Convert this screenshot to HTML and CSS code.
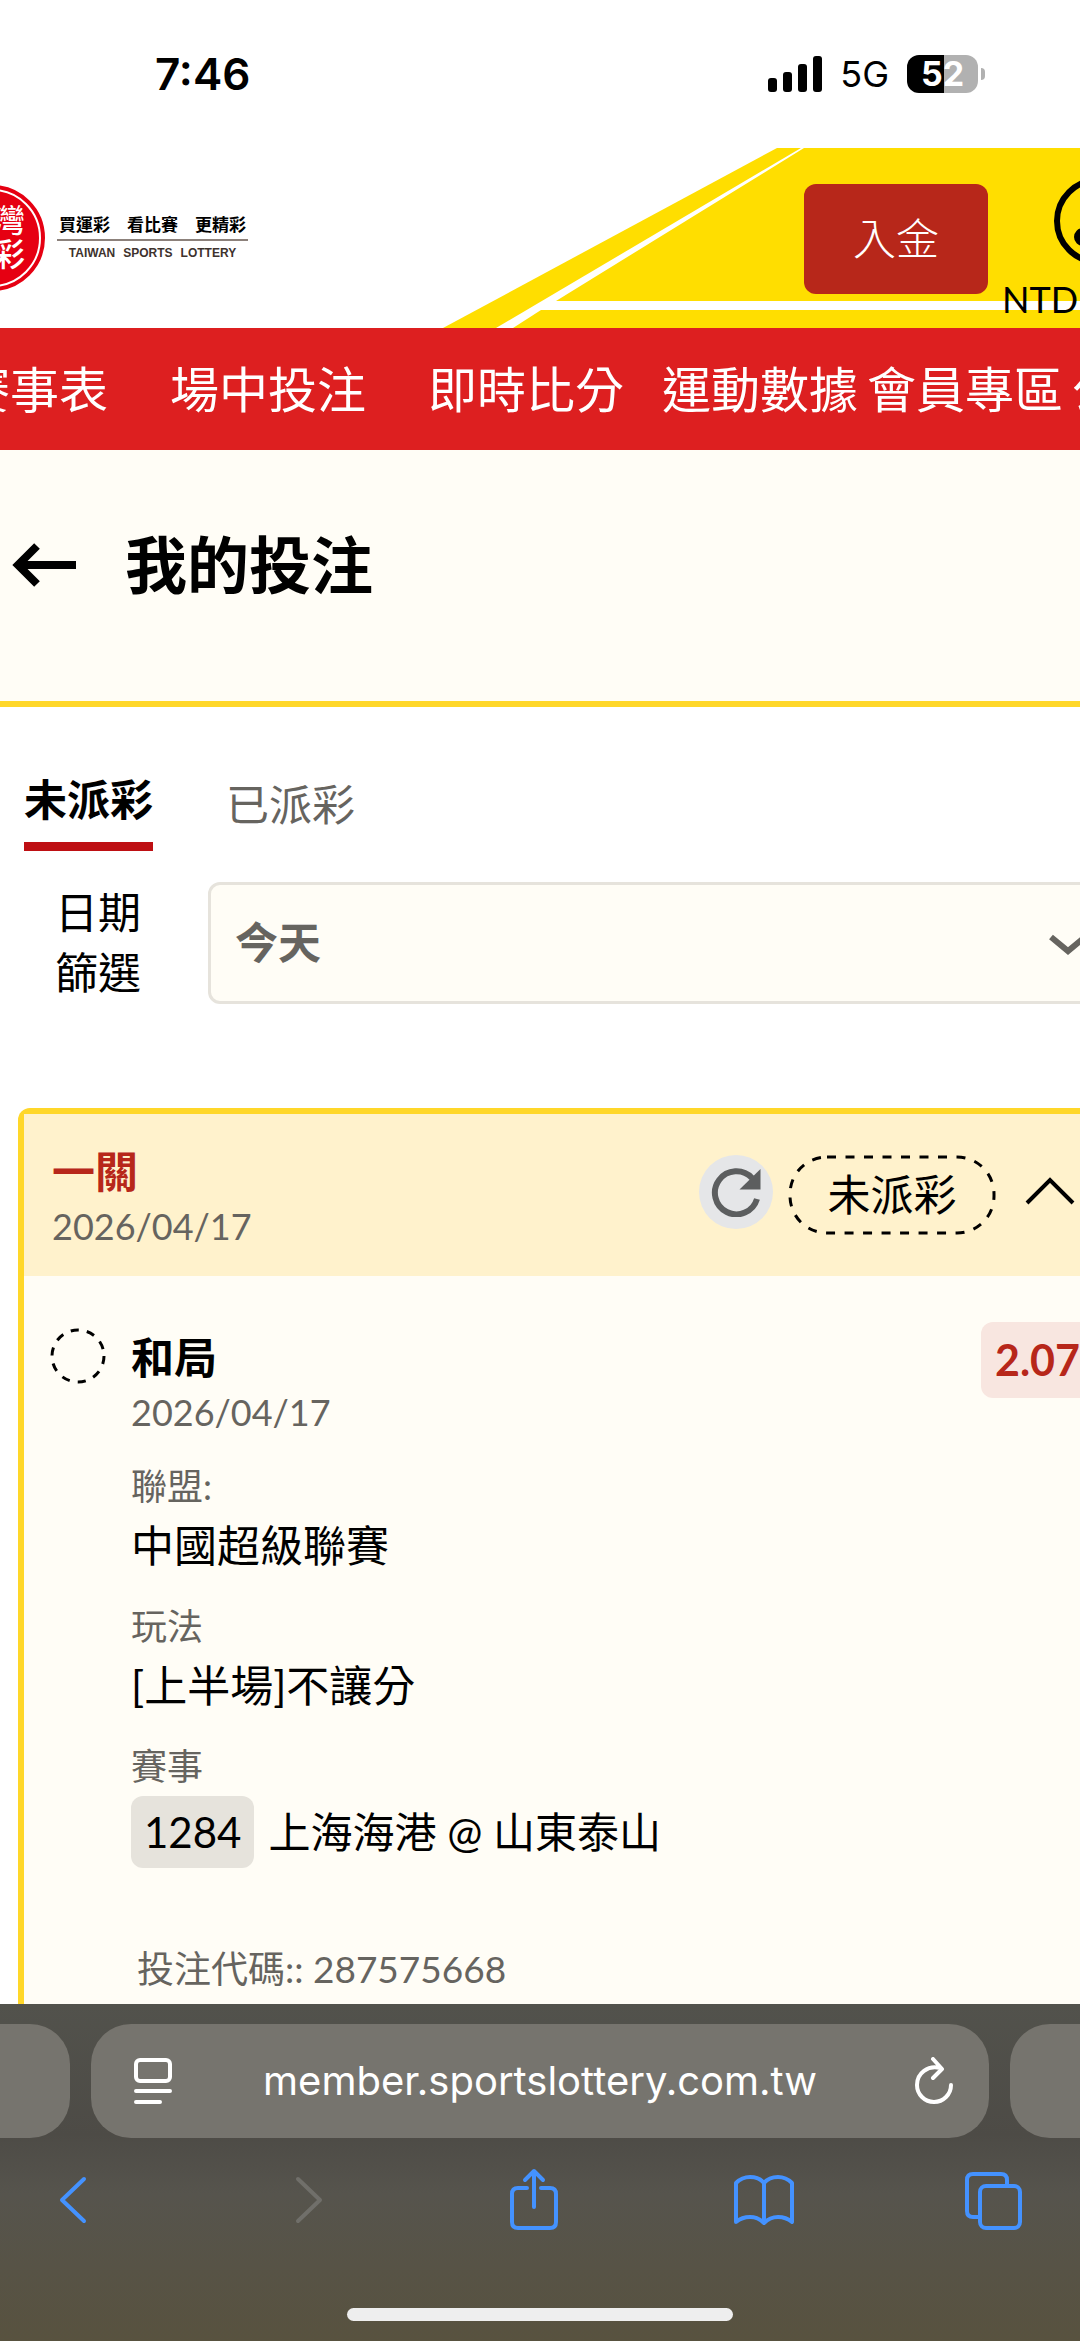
FILE: index.html
```html
<!doctype html>
<html lang="zh-Hant">
  <head>
    <meta charset="utf-8" />
    <meta name="viewport" content="width=device-width, initial-scale=1" />
    <title>我的投注</title>
    <link rel="stylesheet" href="styles.css">
  </head>
  <body>
    <div class="status-bar">
        <time>7:46</time>
        <div class="status-icons">
            <svg width="54" height="36" viewBox="0 0 54 36">
                <rect x="0" y="22" width="9" height="14" rx="3"/>
                <rect x="15" y="16" width="9" height="20" rx="3"/>
                <rect x="30" y="8" width="9" height="28" rx="3"/>
                <rect x="45" y="0" width="9" height="36" rx="3"/>
            </svg>
            <span class="network">5G</span>
            <span class="battery">52</span>
        </div>
    </div>

    <header>
        <svg class="header-bg" width="640" height="180" viewBox="0 0 640 180">
            <path fill="#ffde00" d="M3 180 337 0H361L56 180Z"/>
            <path fill="#ffde00" d="M364 0H640V153H116Z"/>
            <path fill="#ffde00" d="M101 162H640V180H73Z"/>
        </svg>
        <a class="logo" href="#">
            <span class="seal">灣<br>彩</span>
            <span class="slogan">
                <span class="slogan-zh">買運彩　看比賽　更精彩</span>
                <span class="slogan-en"><span>TAIWAN</span> <span>SPORTS</span> <span>LOTTERY</span></span>
            </span>
        </a>
        <div class="account">
            <button class="deposit">入金</button>
            <a class="balance" href="#">
                <svg width="92" height="92" viewBox="0 0 92 92" fill="none" stroke="#000" stroke-width="6">
                    <circle cx="46" cy="46" r="41"/>
                    <circle cx="31" cy="62" r="6"/>
                    <circle cx="61" cy="62" r="6"/>
                </svg>
                <span>NTD</span>
            </a>
        </div>
    </header>

    <nav>
        <a class="wide" href="#">賽事表</a>
        <a class="wide" href="#">場中投注</a>
        <a href="#">即時比分</a>
        <a href="#">運動數據</a>
        <a href="#">會員專區</a>
        <a href="#">公告</a>
    </nav>

    <div class="page-title">
        <button class="back" aria-label="返回">
            <svg width="66" height="46" viewBox="0 0 66 46" fill="none" stroke="#000" stroke-width="8">
                <path d="M65 23H6M26 4 7 23 26 42"/>
            </svg>
        </button>
        <h1>我的投注</h1>
    </div>

    <main>
        <div class="tabs">
            <button class="active">未派彩</button>
            <button>已派彩</button>
        </div>

        <div class="filter">
            <label for="date-filter">日期篩選</label>
            <div class="select">
                <select id="date-filter">
                    <option>今天</option>
                </select>
                <svg width="38" height="22" viewBox="0 0 38 22" fill="none" stroke="#66645f" stroke-width="6">
                    <path d="M2 3 19 17 36 3"/>
                </svg>
            </div>
        </div>

        <section class="bet">
            <div class="bet-header">
                <div class="bet-name">
                    <h2>一關</h2>
                    <p class="date">2026/04/17</p>
                </div>
                <div class="bet-actions">
                    <button class="refresh" aria-label="重新整理">
                        <svg width="50" height="50" viewBox="0 0 50 50">
                            <path d="M41 11A21.500 21.500 0 1 0 46 32" fill="none" stroke="#5c5e5f" stroke-width="6"/>
                            <path fill="#5c5e5f" d="M49.500 2V22.500H28.500Z"/>
                        </svg>
                    </button>
                    <span class="state">
                        <svg width="208" height="80" viewBox="0 0 208 80" fill="none" stroke="#000" stroke-width="3">
                            <rect x="2" y="2" width="204" height="76" rx="37" stroke-dasharray="9 9.500"/>
                        </svg>
                        <span>未派彩</span>
                    </span>
                    <button class="toggle" aria-label="收合">
                        <svg width="50" height="30" viewBox="0 0 50 30" fill="none" stroke="#000" stroke-width="4">
                            <path d="M2 27 25 4 48 27"/>
                        </svg>
                    </button>
                </div>
            </div>

            <div class="bet-body">
                <svg class="pending" width="56" height="56" viewBox="0 0 56 56" fill="none" stroke="#000" stroke-width="3">
                    <circle cx="28" cy="28" r="26" stroke-dasharray="8.200 8.134"/>
                </svg>
                <div class="details">
                    <div class="pick">
                        <h3>和局</h3>
                        <span class="odds">2.07</span>
                    </div>
                    <p class="date">2026/04/17</p>
                    <dl>
                        <dt>聯盟:</dt>
                        <dd>中國超級聯賽</dd>
                        <dt>玩法</dt>
                        <dd>[上半場]不讓分</dd>
                        <dt>賽事</dt>
                        <dd class="match"><span class="match-no">1284</span>上海海港 @ 山東泰山</dd>
                    </dl>
                    <p class="bet-code">投注代碼:: 287575668</p>
                </div>
            </div>
        </section>
    </main>

    <footer>
        <div class="address-row">
            <div class="tab-edge"></div>
            <div class="address">
                <button aria-label="頁面選單">
                    <svg width="38" height="46" viewBox="0 0 38 46" fill="none" stroke="#fff" stroke-width="4" stroke-linecap="round">
                        <rect x="2" y="2" width="34" height="21" rx="4"/>
                        <path d="M2 33H36M2 44H26"/>
                    </svg>
                </button>
                <a href="#">member.sportslottery.com.tw</a>
                <button aria-label="重新載入">
                    <svg width="38" height="48" viewBox="0 0 38 48" fill="none" stroke="#fff" stroke-width="4" stroke-linecap="round" stroke-linejoin="round">
                        <path d="M25 11C13 8 2 16 2 28A17 17 0 0 0 36 28M18 2 27 12 18 21"/>
                    </svg>
                </button>
            </div>
            <div class="tab-edge"></div>
        </div>
        <div class="toolbar">
            <button aria-label="上一頁">
                <svg width="60" height="64" viewBox="0 0 60 64">
                    <path d="M40 11 18 32 40 53"/>
                </svg>
            </button>
            <button disabled aria-label="下一頁">
                <svg width="60" height="64" viewBox="0 0 60 64">
                    <path d="M24 11 46 32 24 53"/>
                </svg>
            </button>
            <button aria-label="分享">
                <svg width="60" height="64" viewBox="0 0 60 64">
                    <path d="M23 20H14Q8 20 8 26V54Q8 60 14 60H46Q52 60 52 54V26Q52 20 46 20H37M30 39V3M21 12 30 3 39 12"/>
                </svg>
            </button>
            <button aria-label="書籤">
                <svg width="60" height="64" viewBox="0 0 60 64">
                    <path d="M30 15Q25 9 16 9 8 9 2 15V54Q8 49 16 49 24 49 30 55 36 49 44 49 52 49 58 54V15Q52 9 44 9 35 9 30 15V55"/>
                </svg>
            </button>
            <button aria-label="分頁">
                <svg width="60" height="64" viewBox="0 0 60 64">
                    <path d="M16 49H9Q3 49 3 43V12Q3 6 9 6H37Q43 6 43 12V18"/>
                    <rect x="16" y="18" width="40" height="42" rx="6"/>
                </svg>
            </button>
        </div>
        <div class="home-indicator"></div>
    </footer>
  </body>
</html>
```

FILE: styles.css
```css
*
{
    box-sizing: border-box;
}

body
{
    display: flex;
    flex-direction: column;
    min-height: 100vh;
    margin: 0;
    overflow-x: hidden;
    background: #fff;
    color: #000;
    font-family: Lato, "Noto Sans CJK TC", sans-serif;
    font-size: 43px;
    line-height: 60px;
}

h1,
h2,
h3,
p,
dl,
dd
{
    margin: 0;
}

button
{
    padding: 0;
    border: 0;
    background: none;
    color: inherit;
    font: inherit;
}

a
{
    color: inherit;
    text-decoration: none;
}

svg
{
    display: block;
    flex: none;
}

/* phone status bar */
.status-bar
{
    display: flex;
    justify-content: space-between;
    align-items: center;
    height: 148px;
    padding: 0 102px 0 155px;
    font-family: Inter, sans-serif;
}

.status-bar time
{
    font-size: 44px;
    font-weight: 600;
}

.status-icons
{
    display: flex;
    align-items: center;
    gap: 18px;
}

.network
{
    font-size: 36px;
}

.battery
{
    position: relative;
    width: 71px;
    height: 38px;
    border-radius: 12px;
    background: linear-gradient(90deg, #000 52%, #b1b1b1 52%);
    color: #fff;
    font-size: 34px;
    font-weight: 700;
    line-height: 38px;
    text-align: center;
}

.battery::after
{
    content: "";
    position: absolute;
    top: 13px;
    right: -7px;
    width: 4px;
    height: 12px;
    border-radius: 0 6px 6px 0;
    background: #b1b1b1;
}

/* site header */
header
{
    position: relative;
    display: flex;
    justify-content: space-between;
    height: 180px;
    overflow: hidden;
}

.header-bg
{
    position: absolute;
    top: 0;
    right: 0;
}

.logo
{
    display: flex;
    align-items: center;
    gap: 12px;
    margin-left: -61px;
}

.seal
{
    width: 106px;
    height: 106px;
    border: 4px solid #e60012;
    border-radius: 50%;
    outline: 2px solid #fff;
    outline-offset: -6px;
    background: #e60012;
    color: #fff;
    font-size: 32px;
    font-weight: 500;
    line-height: 34px;
    padding: 14px 16px 0 0;
    text-align: right;
}

.slogan
{
    display: flex;
    flex-direction: column;
}

.slogan-zh
{
    padding: 0 2px;
    border-bottom: 2px solid #8c817b;
    font-size: 17px;
    font-weight: 700;
    line-height: 28px;
}

.slogan-en
{
    display: flex;
    justify-content: center;
    gap: 8px;
    color: #3e322d;
    font-family: "Liberation Sans", sans-serif;
    font-size: 12px;
    font-weight: 700;
    line-height: 24px;
}

.account
{
    position: relative;
    display: flex;
    gap: 14px;
    margin-right: -71px;
}

.deposit
{
    width: 184px;
    height: 110px;
    margin-top: 36px;
    border-radius: 12px;
    background: #b7271a;
    color: #fff;
    font-weight: 300;
}

.balance
{
    width: 149px;
    padding-top: 27px;
    font-size: 36px;
    line-height: 64px;
}

.balance svg
{
    margin-left: 50px;
}

nav
{
    display: flex;
    align-items: center;
    gap: 9px;
    height: 122px;
    overflow: hidden;
    background: #dd1f20;
    color: #fff;
    font-size: 49px;
    white-space: nowrap;
}

/* page is scrolled sideways, the first item is cut by the edge */
nav a:first-child
{
    margin-left: -39px;
}

nav .wide
{
    margin-right: 53px;
}

nav .wide + a:not(.wide)
{
    margin-right: 29px;
}

.page-title
{
    display: flex;
    align-items: center;
    gap: 48px;
    height: 257px;
    padding: 0 11px 22px;
    border-bottom: 6px solid #ffd729;
    background: #fffdf6;
}

.page-title h1
{
    font-size: 62px;
    font-weight: 700;
    line-height: 80px;
}

main
{
    display: flex;
    flex: 1;
    flex-direction: column;
    margin-right: -46px;
    padding-left: 18px;
}

.tabs
{
    display: flex;
    align-items: flex-start;
    gap: 73px;
    padding: 63px 6px 0;
}

.tabs button
{
    padding-top: 5px;
    color: #66645f;
    line-height: 60px;
}

.tabs .active
{
    padding: 0 0 12px;
    border-bottom: 9px solid #be0f13;
    color: #000;
    font-weight: 700;
}

.filter
{
    display: flex;
    align-items: center;
    gap: 66px;
    padding: 31px 18px 104px 37px;
}

.filter label
{
    width: 87px;
}

.select
{
    position: relative;
    flex: 1;
}

.select select
{
    width: 100%;
    height: 122px;
    padding: 0 24px;
    border: 3px solid #e6e3dc;
    border-radius: 12px;
    appearance: none;
    background: #fffdf6;
    color: #66645f;
    font: inherit;
    font-weight: 700;
}

.select svg
{
    position: absolute;
    top: 52px;
    right: 21px;
}

/* one bet slip */
.bet
{
    flex: 1;
    border: 6px solid #ffd729;
    border-bottom: 0;
    border-radius: 12px 12px 0 0;
    background: #fffdf6;
}

.bet-header
{
    display: flex;
    justify-content: space-between;
    height: 162px;
    padding: 28px 45px 0 28px;
    background: #fff2cc;
}

.bet-header h2,
.pick h3
{
    font-size: 43px;
    font-weight: 700;
}

.bet-header h2
{
    color: #b7271a;
}

.date
{
    color: #66645f;
    font-size: 36px;
    line-height: 48px;
}

.bet-actions
{
    display: flex;
    align-items: flex-start;
    gap: 15px;
    padding-top: 13px;
}

.refresh
{
    display: grid;
    place-items: center;
    width: 74px;
    height: 74px;
    border-radius: 50%;
    background: #e5e6e8;
}

.state
{
    display: grid;
    place-items: center;
}

.state > *
{
    grid-area: 1 / 1;
}

.toggle
{
    padding: 21px 0 0 14px;
}

.bet-body
{
    display: flex;
    align-items: flex-start;
    gap: 25px;
    padding: 46px 26px 0;
}

.pending
{
    margin-top: 6px;
}

.details
{
    flex: 1;
}

.pick
{
    display: flex;
    justify-content: space-between;
    height: 66px;
    padding-top: 6px;
}

.odds
{
    height: 76px;
    margin-top: -6px;
    padding: 0 14px;
    border-radius: 12px;
    background: #f8e6e0;
    color: #b7271a;
    font-weight: 700;
    line-height: 76px;
}

dt
{
    padding-top: 20px;
    color: #66645f;
    font-size: 36px;
    line-height: 60px;
}

.match
{
    font-size: 42px;
}

.match-no
{
    display: inline-block;
    margin-right: 14px;
    padding: 6px 13px;
    border-radius: 12px;
    background: #e6e3dc;
}

.bet-code
{
    padding: 74px 6px 4px;
    color: #66645f;
    font-size: 37px;
    line-height: 54px;
}

/* browser bar */
footer
{
    display: flex;
    flex-direction: column;
    align-items: center;
    height: 337px;
    background: linear-gradient(#52524c, #4d4b46 130px, #56544d 190px, #58523f);
}

.address-row
{
    display: flex;
    gap: 21px;
    width: 100%;
    padding-top: 20px;
}

.tab-edge
{
    width: 70px;
    height: 114px;
    border-radius: 0 40px 40px 0;
    background: #76746e;
}

.tab-edge:last-child
{
    border-radius: 40px 0 0 40px;
}

.address
{
    display: flex;
    flex: 1;
    align-items: center;
    justify-content: space-between;
    height: 114px;
    padding: 0 36px;
    border-radius: 40px;
    background: #76746e;
    color: #fff;
    font-family: Inter, sans-serif;
    font-size: 40px;
}

.address button
{
    width: 45px;
}

.address svg
{
    margin-left: auto;
}

.toolbar
{
    display: flex;
    justify-content: space-between;
    width: 100%;
    padding: 30px 56px 0 44px;
}

.toolbar svg
{
    fill: none;
    stroke: #4492ff;
    stroke-width: 4;
    stroke-linecap: round;
    stroke-linejoin: round;
}

.toolbar button:disabled svg
{
    stroke: #706f6a;
}

.home-indicator
{
    width: 386px;
    height: 13px;
    margin-top: auto;
    margin-bottom: 20px;
    border-radius: 7px;
    background: #eee;
}
```
